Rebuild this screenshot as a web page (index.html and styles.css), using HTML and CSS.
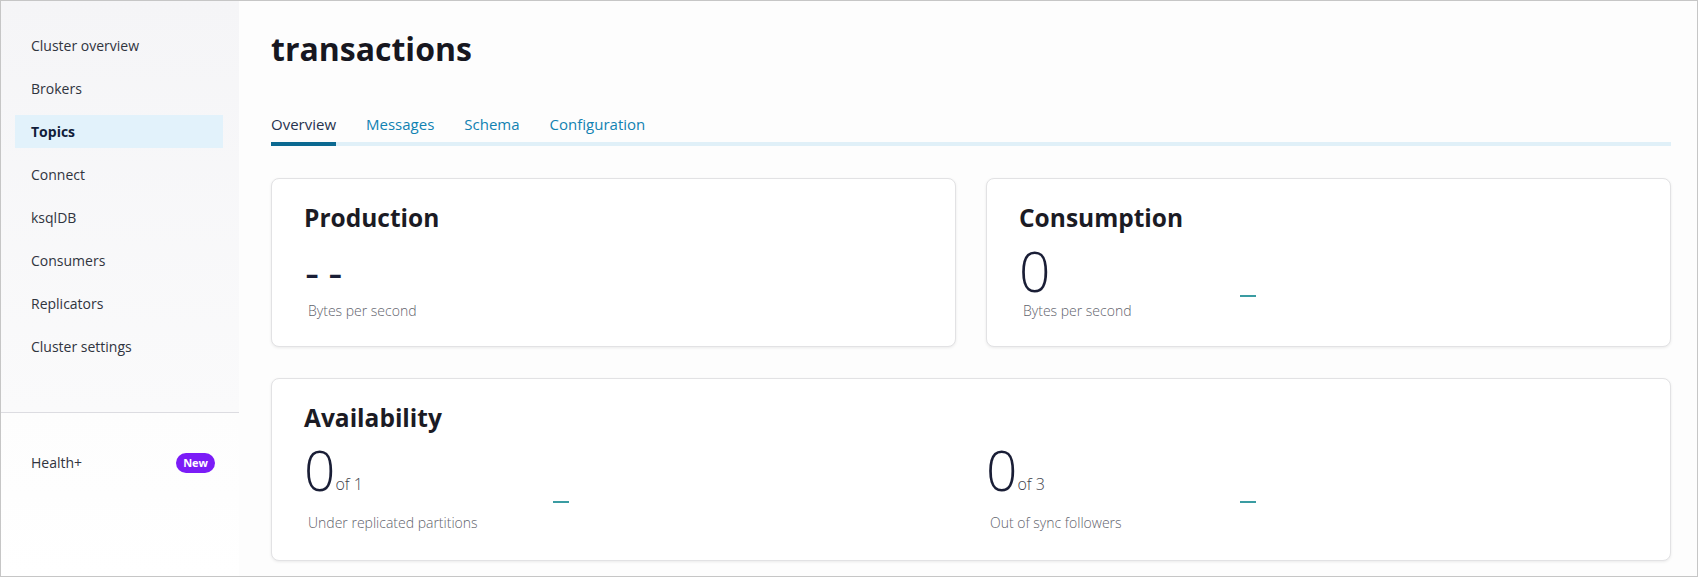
FILE: index.html
```html
<!DOCTYPE html>
<html lang="en">
<head>

    <meta charset="UTF-8">
    <meta name="viewport" content="width=device-width, initial-scale=1.0">
    <title>transactions - Topics</title>

    <link rel="stylesheet" href="styles.css">

</head>

<body>

    <div class="app">

        <aside class="sidebar">
            <nav class="nav">
                <a class="nav-item" href="#">Cluster overview</a>
                <a class="nav-item" href="#">Brokers</a>
                <a class="nav-item active" href="#">Topics</a>
                <a class="nav-item" href="#">Connect</a>
                <a class="nav-item" href="#">ksqlDB</a>
                <a class="nav-item" href="#">Consumers</a>
                <a class="nav-item" href="#">Replicators</a>
                <a class="nav-item" href="#">Cluster settings</a>
            </nav>
            <div class="sidebar-footer">
                <a class="nav-item" href="#">Health+ <span class="badge">New</span></a>
            </div>
        </aside>

        <main class="main">
            <h1 class="page-title">transactions</h1>

            <div class="tabs">
                <a class="tab active" href="#">Overview</a>
                <a class="tab" href="#">Messages</a>
                <a class="tab" href="#">Schema</a>
                <a class="tab" href="#">Configuration</a>
            </div>

            <div class="cards">

                <section class="card">
                    <h2 class="card-title">Production</h2>
                    <div class="metric">
                        <div class="metric-value">
                            <div class="big-number empty">--</div>
                            <div class="metric-label">Bytes per second</div>
                        </div>
                    </div>
                </section>

                <section class="card">
                    <h2 class="card-title">Consumption</h2>
                    <div class="metric">
                        <div class="metric-value">
                            <div class="big-number">0</div>
                            <div class="metric-label">Bytes per second</div>
                        </div>
                        <div class="spark"></div>
                    </div>
                </section>

                <section class="card card-wide">
                    <h2 class="card-title">Availability</h2>
                    <div class="metric-columns">
                        <div class="metric tall">
                            <div class="metric-value partitions">
                                <div class="big-number">0<span class="of-total">of 1</span></div>
                                <div class="metric-label">Under replicated partitions</div>
                            </div>
                            <div class="spark"></div>
                        </div>
                        <div class="metric tall">
                            <div class="metric-value followers">
                                <div class="big-number">0<span class="of-total">of 3</span></div>
                                <div class="metric-label">Out of sync followers</div>
                            </div>
                            <div class="spark"></div>
                        </div>
                    </div>
                </section>

            </div>
        </main>

    </div>

</body>
</html>
```

FILE: styles.css
```css
* {
    box-sizing: border-box;
}

body {
    margin: 0;
    font-family: "Open Sans", Arial, sans-serif;
    color: #2f333d;
    background: #fff;
}

a {
    text-decoration: none;
    color: inherit;
}

.app {
    display: flex;
    height: 577px;
    border: 1px solid #c6c6c6;
    overflow: hidden;
}

/* sidebar */

.sidebar {
    width: 238px;
    flex-shrink: 0;
    display: flex;
    flex-direction: column;
    background: #fff;
}

.nav {
    display: flex;
    flex-direction: column;
    gap: 10px;
    padding: 28px 16px 49px 14px;
    background: linear-gradient(#f5f5f7, #fafafb);
    border-bottom: 1px solid #dcdce1;
}

.nav-item {
    display: flex;
    align-items: center;
    justify-content: space-between;
    height: 33px;
    padding: 0 16px;
    font-size: 14px;
    color: #30343e;
}

.nav-item.active {
    background: #e2f2fb;
    color: #111d3a;
    font-weight: 700;
}

.sidebar-footer {
    flex: 1;
    padding: 33px 16px 0 14px;
    background: linear-gradient(#fdfdfd, #fff);
}

.sidebar-footer .nav-item {
    padding-right: 8px;
}

.badge {
    padding: 0 7px;
    height: 20px;
    line-height: 20px;
    border-radius: 10px;
    background: #7b1cf7;
    color: #fff;
    font-size: 11px;
    font-weight: 700;
}

/* main */

.main {
    flex: 1;
    padding: 28px 26px 0 32px;
    background: #fdfdfd;
}

.page-title {
    margin: 0;
    font-size: 32px;
    line-height: 40px;
    font-weight: 700;
    color: #17171f;
}

.tabs {
    display: flex;
    gap: 30px;
    margin-top: 45px;
    border-bottom: 4px solid #e0f0f8;
}

.tab {
    padding-bottom: 8px;
    margin-bottom: -4px;
    border-bottom: 4px solid transparent;
    font-size: 15px;
    line-height: 20px;
    color: #1182b2;
}

.tab.active {
    color: #28334f;
    border-bottom-color: #0b6991;
}

/* cards */

.cards {
    display: grid;
    grid-template-columns: 1fr 1fr;
    column-gap: 30px;
    row-gap: 31px;
    margin-top: 32px;
}

.card {
    background: #fff;
    border: 1px solid #e2e2e4;
    border-radius: 8px;
    box-shadow: 0 1px 3px rgba(0, 0, 0, 0.08);
    padding: 24px 32px 26px;
}

.card-wide {
    grid-column: 1 / 3;
    padding-bottom: 28px;
}

.card-title {
    margin: 0;
    font-size: 24.5px;
    line-height: 30px;
    font-weight: 700;
    color: #1b1b24;
}

.metric {
    display: flex;
    margin-top: 7px;
}

.metric-columns {
    display: grid;
    grid-template-columns: 1fr 1fr;
    column-gap: 30px;
}

.metric-columns .metric {
    margin-top: 6px;
}

.metric-value {
    width: 221px;
}

.metric-value.partitions {
    width: 249px;
}

.metric-value.followers {
    width: 254px;
}

.big-number {
    font-size: 55px;
    line-height: 62px;
    font-weight: 300;
    color: #1a1e36;
}

/* no data yet: two dashes instead of a value */
.big-number.empty {
    font-size: 44px;
    font-weight: 400;
    letter-spacing: 9px;
    padding-left: 1px;
}

.of-total {
    font-size: 16px;
    line-height: 1;
    vertical-align: 1px;
    color: #3d414b;
}

.metric-label {
    font-size: 14px;
    line-height: 18px;
    font-weight: 300;
    color: #5f636c;
    padding-left: 4px;
}

.metric.tall .metric-label {
    margin-top: 13px;
}

.spark {
    width: 16px;
    height: 2px;
    margin-top: 55px;
    background: #3a9ca2;
}

.metric.tall .spark {
    margin-top: 62px;
}
```
